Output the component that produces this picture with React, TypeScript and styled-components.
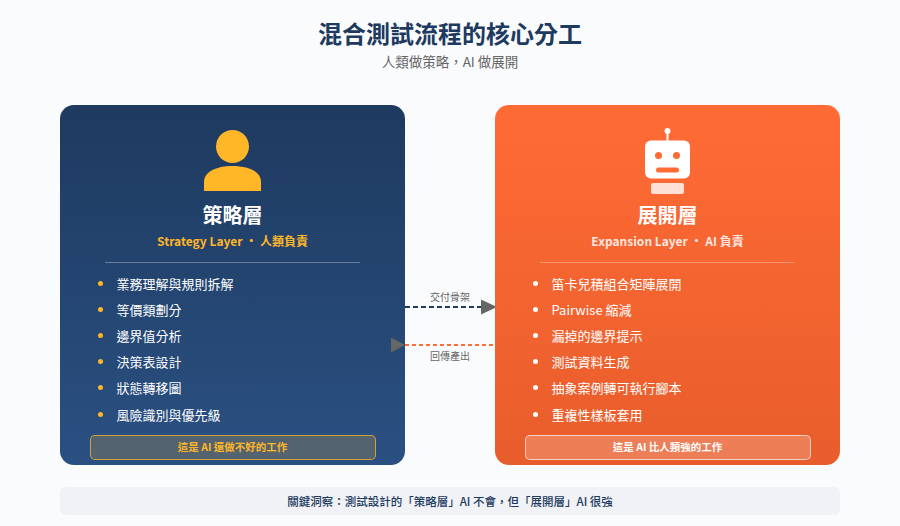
import React from 'react'
import styled, { createGlobalStyle } from 'styled-components'

const Global = createGlobalStyle`
  html, body {
    margin: 0;
    padding: 0;
    background: #fafbfd;
    font-family: "Noto Sans CJK TC", "Noto Sans", sans-serif;
  }
  * {
    box-sizing: border-box;
  }
`

const Page = styled.div`
  width: 900px;
  height: 526px;
  padding: 15px 60px 0;
  overflow: hidden;
`

const Header = styled.header`
  text-align: center;
  height: 90px;
`

const Title = styled.h1`
  margin: 0;
  font-size: 24px;
  line-height: 35px;
  font-weight: 700;
  color: #1e3a5f;
`

const Subtitle = styled.div`
  margin-top: 1px;
  font-size: 13.5px;
  line-height: 20px;
  color: #666;
`

const Columns = styled.div`
  display: grid;
  grid-template-columns: 345px 90px 345px;
  grid-template-rows: 360px;
`

const Card = styled.section<{ $tone: 'navy' | 'orange' }>`
  display: flex;
  flex-direction: column;
  align-items: center;
  padding: 23px 30px 0;
  border-radius: 14px;
  color: #fff;
  background: ${({ $tone }) =>
    $tone === 'navy'
      ? 'linear-gradient(180deg, #1e3a5f 0%, #2a5082 100%)'
      : 'linear-gradient(180deg, #ff6b35 0%, #e85d2c 100%)'};
`

const IconSlot = styled.div`
  height: 65px;
  display: flex;
  justify-content: center;
`

const CardTitle = styled.h2`
  margin: 7px 0 0;
  font-size: 20px;
  line-height: 29px;
  font-weight: 700;
  color: #fff;
`

const CardSub = styled.div<{ $color: string }>`
  margin-top: 3px;
  font-size: 12px;
  line-height: 18px;
  font-weight: 700;
  color: ${({ $color }) => $color};
`

const Divider = styled.hr`
  width: 255px;
  height: 1px;
  margin: 12px 0 0;
  border: 0;
  background: rgba(255, 255, 255, 0.3);
`

const List = styled.ul`
  align-self: stretch;
  margin: 7px 0 0;
  padding: 0 0 0 8px;
  list-style: none;
`

const Item = styled.li<{ $dot: string }>`
  display: flex;
  align-items: center;
  height: 26.2px;
  font-size: 13px;
  color: #fff;

  &::before {
    content: '';
    width: 5px;
    height: 5px;
    margin-right: 13.5px;
    border-radius: 50%;
    flex: none;
    background: ${({ $dot }) => $dot};
  }
`

const Badge = styled.div<{ $tone: 'navy' | 'orange' }>`
  width: 286px;
  height: 25px;
  margin-top: 8px;
  padding-bottom: 2px;
  border-radius: 5px;
  display: flex;
  align-items: center;
  justify-content: center;
  font-size: 10.5px;
  font-weight: 700;
  color: ${({ $tone }) => ($tone === 'navy' ? '#ffb627' : '#fff')};
  background: ${({ $tone }) =>
    $tone === 'navy' ? 'rgba(255, 182, 39, 0.2)' : 'rgba(255, 255, 255, 0.2)'};
  border: 1px solid
    ${({ $tone }) => ($tone === 'navy' ? 'rgba(255, 182, 39, 0.75)' : 'rgba(255, 255, 255, 0.65)')};
`

const Connector = styled.div`
  display: flex;
  flex-direction: column;
  align-items: center;
  padding-top: 186px;
`

const FlowLabel = styled.div`
  font-size: 10px;
  line-height: 12px;
  color: #666;
`

const ArrowSvg = styled.svg<{ $gap?: number }>`
  display: block;
  overflow: visible;
  margin-top: ${({ $gap }) => $gap || 0}px;
  margin-bottom: ${({ $gap }) => ($gap ? 1 : 0)}px;
`

const Insight = styled.div`
  margin-top: 22px;
  height: 28px;
  border-radius: 6px;
  background: #f0f2f5;
  display: flex;
  align-items: center;
  justify-content: center;
  font-size: 11.5px;
  font-weight: 500;
  color: #1e3a5f;
`

const PersonSvg = styled.svg`
  margin-top: 1.5px;
`

const PersonIcon = () => (
  <PersonSvg width="57" height="62" viewBox="0 0 57 62">
    <circle cx="28.5" cy="16.5" r="16.5" fill="#ffb627" />
    <path d="M0 61V52C0 42 12 36 28.5 36S57 42 57 52V61Z" fill="#ffb627" />
  </PersonSvg>
)

const RobotIcon = () => (
  <svg width="46" height="66" viewBox="0 0 46 66">
    <circle cx="22.5" cy="3" r="3" fill="#fff" />
    <rect x="21.5" y="4" width="2" height="10" fill="#fff" />
    <rect x="0" y="12.5" width="45" height="38" rx="6" fill="#fff" />
    <circle cx="13.5" cy="27.5" r="3.5" fill="#ff6b35" />
    <circle cx="31.5" cy="27.5" r="3.5" fill="#ff6b35" />
    <rect x="11" y="39.5" width="23" height="5" rx="2.5" fill="#ff6b35" />
    <rect x="6" y="55" width="33" height="11" rx="2" fill="#fff" opacity="0.8" />
  </svg>
)

const strategy = ['業務理解與規則拆解', '等價類劃分', '邊界值分析', '決策表設計', '狀態轉移圖', '風險識別與優先級']
const expansion = ['笛卡兒積組合矩陣展開', 'Pairwise 縮減', '漏掉的邊界提示', '測試資料生成', '抽象案例轉可執行腳本', '重複性樣板套用']

export default function App() {
  return (
    <Page>
      <Global />
      <Header>
        <Title>混合測試流程的核心分工</Title>
        <Subtitle>人類做策略，AI 做展開</Subtitle>
      </Header>
      <Columns>
        <Card $tone="navy">
          <IconSlot>
            <PersonIcon />
          </IconSlot>
          <CardTitle>策略層</CardTitle>
          <CardSub $color="#ffb627">Strategy Layer ・ 人類負責</CardSub>
          <Divider />
          <List>
            {strategy.map((s) => (
              <Item key={s} $dot="#ffb627">{s}</Item>
            ))}
          </List>
          <Badge $tone="navy">這是 AI 還做不好的工作</Badge>
        </Card>
        <Connector>
          <FlowLabel>交付骨架</FlowLabel>
          <ArrowSvg width="90" height="8" viewBox="0 0 90 8">
            <line x1="0" y1="4" x2="78" y2="4" stroke="#1e3a5f" strokeWidth="2" strokeDasharray="5 3" />
            <polygon points="76,-3.5 92,4 76,11.5" fill="#666" />
          </ArrowSvg>
          <ArrowSvg width="90" height="8" viewBox="0 0 90 8" $gap={30}>
            <line x1="0" y1="4" x2="90" y2="4" stroke="#ff6b35" strokeWidth="2" strokeDasharray="4 3" />
            <polygon points="-14,-3.5 0,4 -14,11.5" fill="#666" />
          </ArrowSvg>
          <FlowLabel>回傳產出</FlowLabel>
        </Connector>
        <Card $tone="orange">
          <IconSlot>
            <RobotIcon />
          </IconSlot>
          <CardTitle>展開層</CardTitle>
          <CardSub $color="rgba(255, 255, 255, 0.85)">Expansion Layer ・ AI 負責</CardSub>
          <Divider />
          <List>
            {expansion.map((s) => (
              <Item key={s} $dot="#fff">{s}</Item>
            ))}
          </List>
          <Badge $tone="orange">這是 AI 比人類強的工作</Badge>
        </Card>
      </Columns>
      <Insight>關鍵洞察：測試設計的「策略層」AI 不會，但「展開層」AI 很強</Insight>
    </Page>
  )
}
